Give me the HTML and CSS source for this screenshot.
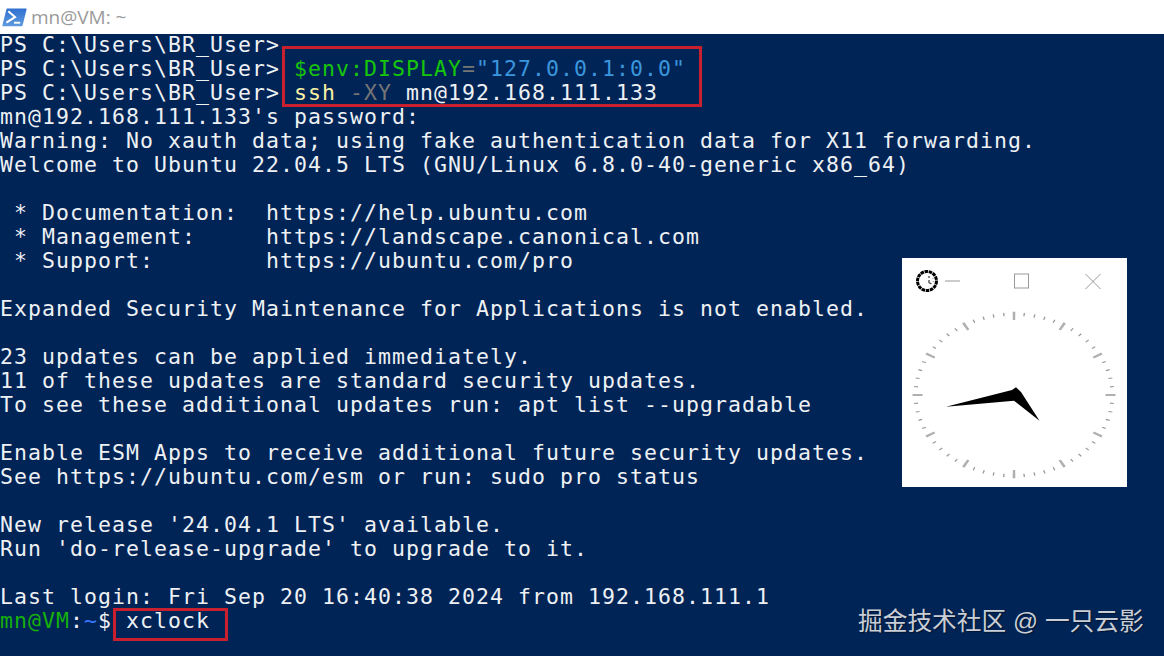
FILE: index.html
```html
<!DOCTYPE html>
<html lang="en">
<head>
<meta charset="utf-8">
<title>mn@VM: ~</title>
<link rel="stylesheet" href="styles.css">
</head>
<body>
<div class="app">
  <header class="titlebar">
    <svg class="ps-icon" viewBox="0 0 26 20" aria-hidden="true">
      <defs><linearGradient id="psg" x1="0" y1="0" x2="0" y2="1"><stop offset="0" stop-color="#2f6fd0"/><stop offset="1" stop-color="#5f9be0"/></linearGradient></defs>
      <path d="M5.5 .5H25a.8.8 0 0 1 .7 1L21.5 18.500a1 1 0 0 1-1 .8H1a.8.8 0 0 1-.8-1L4.500 1.300a1 1 0 0 1 1-.8z" fill="url(#psg)"/>
      <path d="M6.500 3.500 13.500 9.500 4.500 15.500" fill="none" stroke="#fff" stroke-width="2.200"/>
      <path d="M12.500 15.500H19" fill="none" stroke="#fff" stroke-width="2"/>
    </svg>
    <span class="title">mn@VM: ~</span>
  </header>
  <main class="term">
<div class="line">PS C:\Users\BR_User&gt;</div>
<div class="line">PS C:\Users\BR_User&gt; <span class="grn">$env:DISPLAY</span><span class="gry">=</span><span class="blu">"127.0.0.1:0.0"</span></div>
<div class="line">PS C:\Users\BR_User&gt; <span class="yel">ssh</span> <span class="gry">-XY</span> mn@192.168.111.133</div>
<div class="line">mn@192.168.111.133's password:</div>
<div class="line">Warning: No xauth data; using fake authentication data for X11 forwarding.</div>
<div class="line">Welcome to Ubuntu 22.04.5 LTS (GNU/Linux 6.8.0-40-generic x86_64)</div>
<div class="line"> </div>
<div class="line"> * Documentation:  https://help.ubuntu.com</div>
<div class="line"> * Management:     https://landscape.canonical.com</div>
<div class="line"> * Support:        https://ubuntu.com/pro</div>
<div class="line"> </div>
<div class="line">Expanded Security Maintenance for Applications is not enabled.</div>
<div class="line"> </div>
<div class="line">23 updates can be applied immediately.</div>
<div class="line">11 of these updates are standard security updates.</div>
<div class="line">To see these additional updates run: apt list --upgradable</div>
<div class="line"> </div>
<div class="line">Enable ESM Apps to receive additional future security updates.</div>
<div class="line">See https://ubuntu.com/esm or run: sudo pro status</div>
<div class="line"> </div>
<div class="line">New release '24.04.1 LTS' available.</div>
<div class="line">Run 'do-release-upgrade' to upgrade to it.</div>
<div class="line"> </div>
<div class="line">Last login: Fri Sep 20 16:40:38 2024 from 192.168.111.1</div>
<div class="line"><span class="prompt">mn@VM</span>:<span class="tilde">~</span>$ xclock</div>
  </main>

  <div class="mark mark-top"></div>
  <div class="mark mark-bottom"></div>

  <section class="xclock">
    <div class="xbar">
      <svg class="xicon" viewBox="0 0 24 24" aria-hidden="true">
        <circle cx="12" cy="12" r="9.500" fill="#fff" stroke="#000" stroke-width="3" stroke-dasharray="3.500 .7"/>
        <path d="M14 7v2M14 11v2.500L16.500 15M18 9.500v.5M18.500 12.500v.5" fill="none" stroke="#555" stroke-width="1.400"/>
      </svg>
      <svg class="xbtns" viewBox="0 0 180 20" aria-hidden="true">
        <path d="M0 10H15" stroke="#999" stroke-width="1" fill="none"/>
        <rect x="69.500" y="3" width="14" height="14" fill="none" stroke="#999" stroke-width="1"/>
        <path d="M140.500 3 155.500 18M155.500 3 140.500 18" stroke="#999" stroke-width="1" fill="none"/>
      </svg>
    </div>
    <svg class="face" viewBox="0 0 225 229" aria-hidden="true">
      <g transform="translate(112 137) scale(1 .82)">
        <circle class="tick" r="98.500" pathLength="60"/>
        <circle class="tick-major" r="96.500" pathLength="60"/>
      </g>
      <path d="M44 148.700 110 132 114 129.300 119 134 137.500 162.700 112 142.700Z" fill="#000"/>
    </svg>
  </section>

  <div class="wm">掘金技术社区 @ 一只云影</div>
</div>
</body>
</html>
```

FILE: styles.css
```css
* { box-sizing: border-box; }
html, body { margin: 0; padding: 0; }
body { width: 1164px; height: 656px; overflow: hidden; background: #012456; }
.app { position: relative; width: 1164px; height: 656px; display: flex; flex-direction: column; }

.titlebar { height: 34px; flex: none; background: #fff; display: flex; align-items: center; gap: 4px; padding: 0 0 0 2px; }
.ps-icon { width: 25px; height: 19px; flex: none; }
.title { font: 19px "Open Sans", "Liberation Sans", sans-serif; color: #9a9a9a; }

.term { flex: 1; background: #012456; color: #eef1f4; font-family: "DejaVu Sans Mono", monospace; font-size: 21.500px; letter-spacing: 1.056px; }
.line { height: 24px; line-height: 22px; white-space: pre; }
.grn { color: #16c60c; }
.gry { color: #767676; }
.blu { color: #3a96dd; }
.yel { color: #f9f1a5; }
.prompt { color: #16b00c; }
.tilde { color: #3b78ff; }

.mark { position: absolute; border: 3px solid #c8202f; pointer-events: none; }
.mark-top { left: 282px; top: 46px; width: 420px; height: 61px; }
.mark-bottom { left: 113px; top: 608px; width: 115px; height: 33px; }

.xclock { position: absolute; left: 902px; top: 258px; width: 225px; height: 229px; background: #fff; }
.xbar { position: absolute; left: 0; top: 0; right: 0; height: 44px; display: flex; align-items: center; }
.xicon { position: absolute; left: 13px; top: 11px; width: 24px; height: 24px; }
.xbtns { position: absolute; left: 43px; top: 13px; width: 180px; height: 20px; }
.face { display: block; width: 225px; height: 229px; }
.tick { fill: none; stroke: #9a9a9a; stroke-width: 4px; stroke-dasharray: .13 .87; stroke-dashoffset: .065; }
.tick-major { fill: none; stroke: #b0b0b0; stroke-width: 10px; stroke-dasharray: .26 4.740; stroke-dashoffset: .13; }

.wm { position: absolute; left: 858px; top: 605px; font-family: "Liberation Sans", "Noto Sans CJK SC", sans-serif; font-size: 24.700px; line-height: 33px; color: #c9ced6; text-shadow: 1px 1px 1px rgba(0,0,0,.45); white-space: pre; }
```
